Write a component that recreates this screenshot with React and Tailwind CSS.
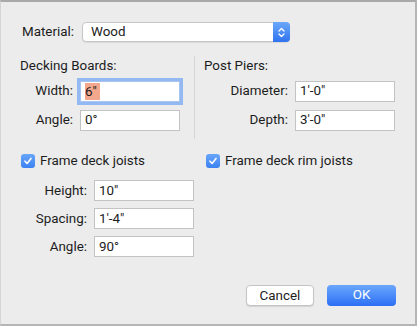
import React from "react";

const font = { fontFamily: "Roboto, 'Liberation Sans', sans-serif" };

const Field = ({ label, value, labelW, focused, selected }) => (
  <div className="flex items-center h-[21px]">
    <span className="text-right text-[13.4px] text-[#1c1c1c]" style={{ width: labelW }}>
      {label}:
    </span>
    <div
      className={`ml-[7px] h-[21px] w-[100px] bg-white flex items-center pl-[4px] text-[13.4px] text-[#1c1c1c] ${
        focused ? "border border-[#a8c4f0] ring-[3px] ring-[#94b8f2]" : "border border-[#c3c3c3]"
      }`}
    >
      {selected ? <span className="bg-[#f3a88e] inline-block leading-[17px] pr-[3px]">{value}</span> : value}
    </div>
  </div>
);

const Check = ({ label }) => (
  <label className="flex items-center gap-[5px] text-[13.4px] text-[#1c1c1c]">
    <span className="w-[14px] h-[14px] rounded-[3px] bg-gradient-to-b from-[#69a6f9] to-[#3b82f3] flex items-center justify-center">
      <svg width="10" height="10" viewBox="0 0 10 10">
        <path d="M2 5.2 L4.1 7.4 L8 2.4" fill="none" stroke="white" strokeWidth="1.6" strokeLinecap="round" strokeLinejoin="round" />
      </svg>
    </span>
    {label}
  </label>
);

export default function App() {
  return (
    <div
      className="w-[417px] h-[326px] bg-[#ececec] border-t-2 border-t-[#a9a9a9] border-r-2 border-r-[#b5b5b5] border-b-2 border-b-[#b5b5b5] border-l border-l-[#d4d4d4] flex flex-col"
      style={font}
    >
      <div className="flex items-center pl-[21px] mt-[20px] h-[20px]">
        <span className="text-[13.4px] text-[#1c1c1c]">Material:</span>
        <div className="ml-[8px] w-[208px] h-[20px] flex bg-white border border-[#c6c6c6] rounded-[4px] shadow-[0_1px_1px_rgba(0,0,0,0.08)]">
          <span className="flex-1 pl-[8px] text-[13.4px] leading-[18px] text-[#1c1c1c]">Wood</span>
          <span className="w-[17px] -my-[1px] -mr-[1px] rounded-r-[4px] bg-gradient-to-b from-[#6aa8fa] to-[#2f73f0] flex items-center justify-center">
            <svg width="9" height="13" viewBox="0 0 9 13">
              <path d="M2 5 L4.5 2.5 L7 5 M2 8 L4.5 10.5 L7 8" fill="none" stroke="white" strokeWidth="1.3" strokeLinecap="round" strokeLinejoin="round" />
            </svg>
          </span>
        </div>
      </div>

      <div className="flex mt-[14px] pl-[19px]">
        <div className="w-[175px] h-[83px] border-r border-r-[#d6d6d6]">
          <div className="text-[13.4px] text-[#1c1c1c] leading-[16px] mt-[2px]">Decking Boards:</div>
          <div className="mt-[7px] flex flex-col gap-[8px]">
            <Field label="Width" value={'6"'} labelW={53} focused selected />
            <Field label="Angle" value="0°" labelW={53} />
          </div>
        </div>
        <div className="pl-[9px]">
          <div className="text-[13.4px] text-[#1c1c1c] leading-[16px] mt-[2px]">Post Piers:</div>
          <div className="mt-[7px] flex flex-col gap-[8px]">
            <Field label="Diameter" value={"1'-0\""} labelW={84} />
            <Field label="Depth" value={"3'-0\""} labelW={84} />
          </div>
        </div>
      </div>

      <div className="flex mt-[12px] pl-[20px]">
        <div className="w-[185px]">
          <Check label="Frame deck joists" />
        </div>
        <Check label="Frame deck rim joists" />
      </div>

      <div className="mt-[9px] pl-[20px] flex flex-col gap-[7px]">
        <Field label="Height" value={'10"'} labelW={66} />
        <Field label="Spacing" value={"1'-4\""} labelW={66} />
        <Field label="Angle" value="90°" labelW={66} />
      </div>

      <div className="mt-auto mb-[18px] flex justify-end gap-[13px] pr-[19px]">
        <button className="w-[68px] h-[21px] bg-white border border-[#c4c4c4] rounded-[4px] text-[13.4px] text-[#1c1c1c] shadow-[0_1px_1px_rgba(0,0,0,0.1)]">
          Cancel
        </button>
        <button className="w-[69px] h-[21px] rounded-[4px] bg-gradient-to-b from-[#6aa6fb] to-[#2d6ef5] text-[13.4px] text-white">
          OK
        </button>
      </div>
    </div>
  );
}
